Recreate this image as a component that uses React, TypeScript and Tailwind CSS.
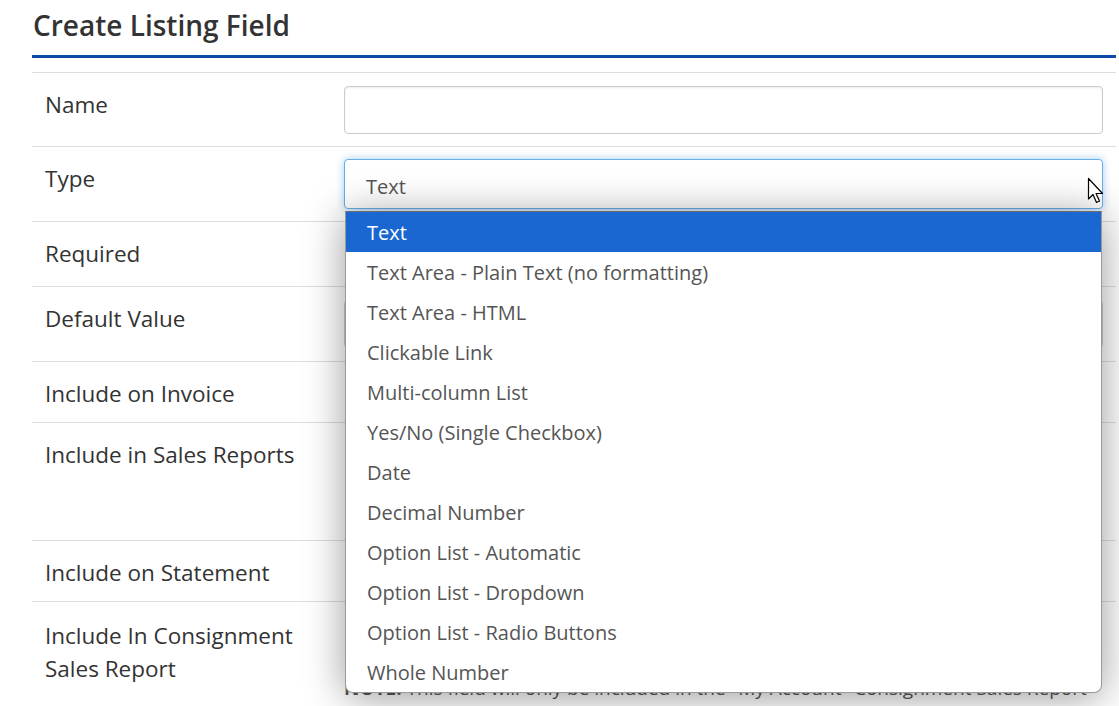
import React from "react";

const options = [
  "Text",
  "Text Area - Plain Text (no formatting)",
  "Text Area - HTML",
  "Clickable Link",
  "Multi-column List",
  "Yes/No (Single Checkbox)",
  "Date",
  "Decimal Number",
  "Option List - Automatic",
  "Option List - Dropdown",
  "Option List - Radio Buttons",
  "Whole Number",
];

function Row({ label, h, children }: { label: React.ReactNode; h: string; children?: React.ReactNode }) {
  return (
    <div className={`flex border-t border-[#dddddd] ${h}`}>
      <div className="w-[312px] shrink-0 pl-[13px] pt-[17px] text-[22.5px] leading-[30px] text-[#333333]">{label}</div>
      <div className="flex-1 pr-[13px]">{children}</div>
    </div>
  );
}

export default function App() {
  return (
    <div
      className="relative h-[706px] w-[1119px] overflow-hidden bg-white"
      style={{ fontFamily: '"Open Sans", "Noto Sans", sans-serif' }}
    >
      <div className="pl-[32px] pr-[3px]">
        <h1 className="pt-[4px] pl-[1px] text-[28px] font-semibold leading-[42px] text-[#333333]">Create Listing Field</h1>
        <div className="mt-[9px] h-[3px] bg-[#0b4aa6]" />
        <div className="mt-[14px]">
          <Row label="Name" h="h-[74px]">
            <div className="mt-[13px] h-[48px] rounded-[4px] border border-[#cccccc] bg-white shadow-[inset_0_1px_2px_rgba(0,0,0,0.08)]" />
          </Row>
          <Row label="Type" h="h-[75px]">
            <div className="mt-[12px] flex h-[50px] items-center rounded-[4px] border border-[#66afe9] bg-white pl-[21px] pt-[6px] text-[20px] text-[#555555] shadow-[0_0_8px_rgba(102,175,233,0.6)]">
              Text
            </div>
          </Row>
          <Row label="Required" h="h-[65px]" />
          <Row label="Default Value" h="h-[75px]">
            <div className="mt-[13px] h-[48px] rounded-[4px] border border-[#cccccc] bg-white" />
          </Row>
          <Row label="Include on Invoice" h="h-[61px]" />
          <Row label="Include in Sales Reports" h="h-[118px]" />
          <Row label="Include on Statement" h="h-[61px]" />
          <Row
            label={
              <span className="block leading-[33px]">
                Include In Consignment
                <br />
                Sales Report
              </span>
            }
            h="h-[110px]"
          >
            <div className="pt-[71px] text-[19px] leading-[30px] text-[#555555] whitespace-nowrap">
              <b>NOTE:</b> This field will only be included in the "My Account" Consignment Sales Report
            </div>
          </Row>
        </div>
      </div>

      {/* dropdown list */}
      <div className="absolute left-[345px] top-[211px] w-[757px] overflow-hidden rounded-b-[8px] border border-[#9a9a9a] border-t-[#6f6f6f] bg-white shadow-[0_4px_40px_rgba(0,0,0,0.4)]">
        {options.map((o, i) => (
          <div
            key={o}
            className={`flex h-[40px] items-center pl-[21px] pt-[2px] text-[20px] ${
              i === 0 ? "bg-[#1a67d2] text-white" : "text-[#555555]"
            }`}
          >
            {o}
          </div>
        ))}
      </div>

      {/* cursor */}
      <svg className="absolute left-[1087px] top-[177px]" width="20" height="30" viewBox="0 0 20 30">
        <path d="M1.5 1.5 L1.5 22 L6 17.5 L9.5 25.5 L12.5 24 L9 16.5 L15.5 16.5 Z" fill="white" stroke="black" strokeWidth="1.2" strokeLinejoin="round" />
      </svg>
    </div>
  );
}
